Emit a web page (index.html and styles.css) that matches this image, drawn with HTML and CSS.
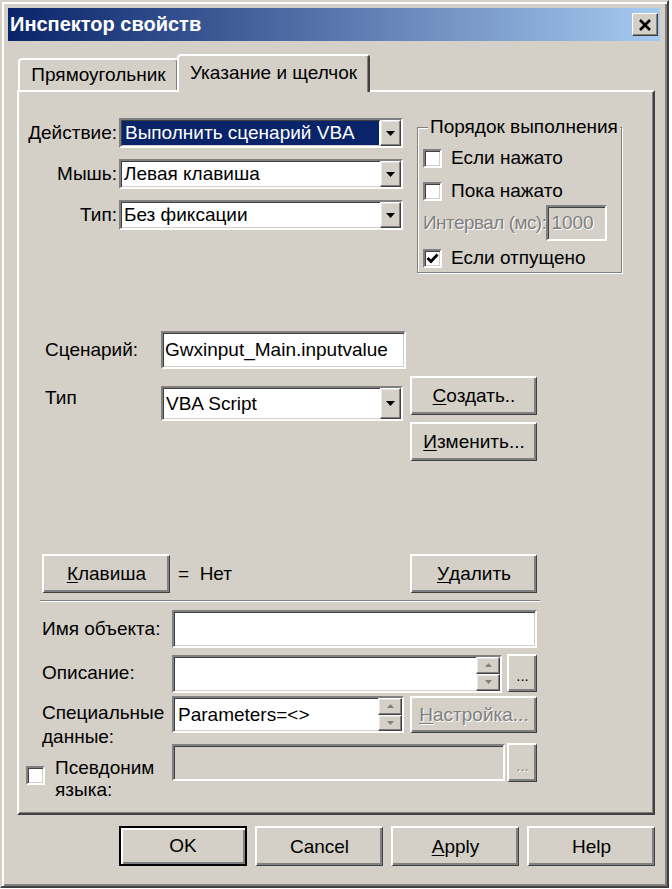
FILE: index.html
```html
<!DOCTYPE html>
<html lang="ru">
<head>
<meta charset="utf-8">
<title>Инспектор свойств</title>
<link rel="stylesheet" href="styles.css">
</head>
<body>
<div class="window">
  <div class="titlebar">
    <span class="title">Инспектор свойств</span>
    <span class="close"><svg width="14" height="12" viewBox="0 0 14 12"><path d="M2 1 L12 11 M12 1 L2 11" stroke="#000" stroke-width="2.6" fill="none"/></svg></span>
  </div>

  <div class="tabs">
    <div class="tab">Прямоугольник</div>
    <div class="tab active">Указание и щелчок</div>
  </div>

  <div class="panel">
    <div class="sec-top">
      <div class="act-grid">
        <span class="lbl-r">Действие:</span>
        <div class="combo sunken"><span class="combo-text sel">Выполнить сценарий VBA</span><span class="drop raised-sm"><svg width="9" height="5" viewBox="0 0 9 5"><polygon points="0,0 9,0 4.5,5" fill="#000"/></svg></span></div>
        <span class="lbl-r">Мышь:</span>
        <div class="combo sunken"><span class="combo-text">Левая клавиша</span><span class="drop raised-sm"><svg width="9" height="5" viewBox="0 0 9 5"><polygon points="0,0 9,0 4.5,5" fill="#000"/></svg></span></div>
        <span class="lbl-r">Тип:</span>
        <div class="combo sunken"><span class="combo-text">Без фиксации</span><span class="drop raised-sm"><svg width="9" height="5" viewBox="0 0 9 5"><polygon points="0,0 9,0 4.5,5" fill="#000"/></svg></span></div>
      </div>

      <div class="group">
        <div class="legend">Порядок выполнения</div>
        <div class="chk-row r1"><span class="check sunken-chk"></span><span>Если нажато</span></div>
        <div class="chk-row r2"><span class="check sunken-chk"></span><span>Пока нажато</span></div>
        <div class="interval"><span class="dis tight">Интервал (мс):</span><span class="field sunken int-field"><span class="dis">1000</span></span></div>
        <div class="chk-row r3"><span class="check sunken-chk"><svg width="13" height="11" viewBox="0 0 13 11"><path d="M1.5 5 L5 8.5 L11.5 1.5" stroke="#000" stroke-width="2.8" fill="none"/></svg></span><span>Если отпущено</span></div>
      </div>
    </div>

    <div class="row-script">
      <span class="lbl-s">Сценарий:</span>
      <div class="field sunken script-field">Gwxinput_Main.inputvalue</div>
    </div>

    <div class="row-type">
      <span class="lbl-s type-lbl">Тип</span>
      <div class="combo sunken type-combo"><span class="combo-text">VBA Script</span><span class="drop raised-sm"><svg width="9" height="5" viewBox="0 0 9 5"><polygon points="0,0 9,0 4.5,5" fill="#000"/></svg></span></div>
      <div class="btn-col">
        <span class="btn raised"><u>С</u>оздать..</span>
        <span class="btn raised"><u>И</u>зменить...</span>
      </div>
    </div>

    <div class="row-key">
      <span class="btn raised key-btn"><u>К</u>лавиша</span>
      <span class="key-val">=&nbsp; Нет</span>
      <span class="btn raised del-btn"><u>У</u>далить</span>
    </div>

    <div class="sep"></div>

    <div class="prop-row row-name">
      <span class="plbl">Имя объекта:</span>
      <div class="field sunken name-field"></div>
    </div>

    <div class="prop-row row-desc">
      <span class="plbl">Описание:</span>
      <div class="field sunken desc-field">
        <span class="ftext"></span>
        <span class="spin"><span class="sp raised-sm"><svg width="7" height="4" viewBox="0 0 7 4"><polygon points="0,4 7,4 3.5,0" fill="#808080"/></svg></span><span class="sp raised-sm"><svg width="7" height="4" viewBox="0 0 7 4"><polygon points="0,0 7,0 3.5,4" fill="#808080"/></svg></span></span>
      </div>
      <span class="btn raised dots">...</span>
    </div>

    <div class="prop-row row-spec">
      <span class="plbl two">Специальные<br>данные:</span>
      <div class="field sunken spec-field">
        <span class="ftext">Parameters=&lt;&gt;</span>
        <span class="spin"><span class="sp raised-sm"><svg width="7" height="4" viewBox="0 0 7 4"><polygon points="0,4 7,4 3.5,0" fill="#808080"/></svg></span><span class="sp raised-sm"><svg width="7" height="4" viewBox="0 0 7 4"><polygon points="0,0 7,0 3.5,4" fill="#808080"/></svg></span></span>
      </div>
      <span class="btn raised setup-btn dis"><u>Н</u>астройка...</span>
    </div>

    <div class="prop-row row-alias">
      <span class="check sunken-chk alias-chk"></span>
      <span class="alias-lbl">Псевдоним<br>языка:</span>
      <div class="field sunken alias-field disabled"></div>
      <span class="btn raised dots alias-dots dis">...</span>
    </div>
  </div>

  <div class="footer">
    <span class="btn fbtn default">OK</span>
    <span class="btn fbtn raised">Cancel</span>
    <span class="btn fbtn raised"><u>A</u>pply</span>
    <span class="btn fbtn raised">Help</span>
  </div>
</div>
</body>
</html>
```

FILE: styles.css
```css
* { box-sizing: border-box; }
html, body { margin: 0; padding: 0; background: #ffffff; }
body {
  font-family: "Liberation Sans", Arial, sans-serif;
  font-size: 19px;
  color: #000;
}
u { text-decoration: underline; text-underline-offset: 2px; }

.window {
  width: 669px;
  height: 888px;
  background: #d4d0c8;
  border: 2px solid;
  border-color: #d4d0c8 #404040 #404040 #d4d0c8;
  box-shadow: inset 2px 2px #ffffff, inset -2px -2px #808080;
  padding: 6px 7px 0 6px;
}

/* title bar */
.titlebar {
  height: 33px;
  background: linear-gradient(to right, #0a246a, #a6caf0);
  display: flex;
  align-items: center;
  justify-content: space-between;
  padding: 0 2px 0 2px;
}
.title { color: #fff; font-weight: bold; font-size: 20px; }
.close {
  width: 26px;
  height: 23px;
  background: #d4d0c8;
  border-style: solid;
  border-width: 1px;
  border-color: #ffffff #404040 #404040 #ffffff;
  box-shadow: inset -1px -1px #808080;
  display: flex;
  align-items: center;
  justify-content: center;
}

/* tabs */
.tabs {
  display: flex;
  align-items: flex-end;
  height: 36px;
  margin: 13px 0 0 10px;
}
.tab {
  height: 32px;
  width: 161px;
  display: flex;
  align-items: center;
  justify-content: center;
  background: #d4d0c8;
  border-style: solid;
  border-width: 2px 2px 0 2px;
  border-color: #ffffff #404040 transparent #ffffff;
  box-shadow: inset -1px 0 #808080;
  border-radius: 4px 4px 0 0;
}
.tab.active {
  position: relative;
  z-index: 1;
  height: 38px;
  width: 193px;
  margin-left: -2px;
  margin-bottom: -2px;
  padding-bottom: 3px;
}

/* panel */
.panel {
  width: 638px;
  height: 725px;
  margin-left: 9px;
  border-style: solid;
  border-width: 2px;
  border-color: #ffffff #404040 #404040 #ffffff;
  box-shadow: inset -1px -1px #808080;
  padding-top: 26px;
}

/* 3D styles */
.sunken {
  background: #fff;
  border-style: solid;
  border-width: 2px;
  border-color: #808080 #ffffff #ffffff #808080;
  box-shadow: inset 1px 1px #404040, inset -1px -1px #d4d0c8;
}
.raised {
  background: #d4d0c8;
  border-style: solid;
  border-width: 2px 1px 1px 2px;
  border-color: #ffffff #404040 #404040 #ffffff;
  box-shadow: inset -2px -2px #808080;
}
.raised-sm {
  background: #d4d0c8;
  border-style: solid;
  border-width: 1px;
  border-color: #ffffff #404040 #404040 #ffffff;
  box-shadow: inset -1px -1px #808080, inset 1px 1px #e8e6e2;
}
.dis { color: #808080; text-shadow: 1px 1px #ffffff; }

/* top section */
.sec-top { display: flex; align-items: flex-start; }
.act-grid {
  display: grid;
  grid-template-columns: 98px 284px;
  grid-auto-rows: 30px;
  column-gap: 2px;
  row-gap: 11px;
}
.lbl-r { text-align: right; align-self: center; white-space: nowrap; }
.combo { display: flex; height: 30px; }
.combo-text {
  flex: 1;
  display: flex;
  align-items: center;
  padding-left: 3px;
  white-space: nowrap;
  overflow: hidden;
}
.combo-text.sel { background: #0a246a; color: #fff; margin: 1px; padding-left: 3px; }
.drop {
  width: 21px;
  display: flex;
  align-items: center;
  justify-content: center;
}

/* group box */
.group {
  margin: 9px 0 0 14px;
  width: 205px;
  height: 146px;
  border: 1px solid #808080;
  box-shadow: inset 1px 1px #ffffff, 1px 1px #ffffff;
  padding: 0 0 0 5px;
}
.legend {
  display: table;
  margin: -12px 0 0 5px;
  padding: 0 2px;
  background: #d4d0c8;
  line-height: 22px;
  white-space: nowrap;
}
.chk-row { display: flex; align-items: center; height: 28px; gap: 9px; white-space: nowrap; }
.chk-row.r1 { margin-top: 6px; }
.chk-row.r2 { margin-top: 5px; }
.chk-row.r3 { margin-top: 3px; }
.check {
  width: 19px;
  height: 19px;
  flex: none;
  display: flex;
  align-items: center;
  justify-content: center;
}
.sunken-chk {
  background: #fff;
  border-style: solid;
  border-width: 2px;
  border-color: #808080 #ffffff #ffffff #808080;
  box-shadow: inset 1px 1px #404040, inset -1px -1px #d4d0c8;
}
.interval { display: flex; align-items: center; height: 36px; white-space: nowrap; }
.tight { letter-spacing: -0.55px; }
.field { display: flex; align-items: center; padding-left: 2px; white-space: nowrap; overflow: hidden; }
.int-field { width: 61px; height: 36px; background: #d4d0c8; padding-left: 3px; flex: none; }

/* script rows */
.row-script { display: flex; align-items: center; margin: 58px 0 0 26px; }
.lbl-s { width: 116px; flex: none; }
.script-field { width: 245px; height: 38px; }
.row-type { display: flex; align-items: flex-start; margin: 7px 0 0 26px; }
.type-lbl { margin-top: 10px; line-height: 24px; }
.type-combo { width: 242px; height: 35px; margin-top: 10px; }
.btn-col { display: flex; flex-direction: column; gap: 7px; margin-left: 7px; }
.btn {
  display: flex;
  align-items: center;
  justify-content: center;
  white-space: nowrap;
}
.btn-col .btn { width: 127px; height: 39px; }

/* key row */
.row-key { display: flex; align-items: center; margin: 93px 0 0 23px; width: 495px; }
.key-btn { width: 128px; height: 39px; }
.key-val { margin-left: 8px; }
.del-btn { width: 127px; height: 39px; margin-left: auto; }

.sep {
  margin: 7px 0 0 21px;
  width: 500px;
  height: 2px;
  border-top: 1px solid #808080;
  border-bottom: 1px solid #ffffff;
}

/* property rows */
.prop-row { display: flex; align-items: center; margin-left: 23px; }
.plbl { width: 130px; flex: none; white-space: nowrap; }
.row-name { margin-top: 8px; }
.name-field { width: 365px; height: 38px; }
.row-desc { margin-top: 6px; height: 38px; }
.desc-field { width: 330px; height: 38px; margin-top: 1px; }
.ftext { flex: 1; }
.spin { width: 24px; align-self: stretch; display: flex; flex-direction: column; }
.sp { flex: 1; display: flex; align-items: center; justify-content: center; }
.dots { width: 30px; height: 38px; margin-left: 5px; font-size: 15px; padding-top: 4px; }
.row-spec { margin-top: 4px; height: 37px; align-items: flex-start; }
.plbl.two { line-height: 24px; margin-top: 5px; }
.spec-field { width: 232px; height: 37px; }
.spec-field .ftext { padding-left: 2px; }
.setup-btn { width: 127px; height: 37px; margin-left: 6px; }
.row-alias { margin: 10px 0 0 7px; height: 39px; align-items: flex-start; }
.alias-chk { margin-top: 23px; }
.alias-lbl { width: 117px; margin-left: 10px; line-height: 22px; margin-top: 14px; flex: none; }
.alias-field { width: 333px; height: 37px; margin-top: 1px; }
.field.disabled { background: #d4d0c8; }
.alias-dots { width: 30px; height: 39px; margin-left: 2px; }

/* footer */
.footer {
  display: flex;
  justify-content: flex-end;
  gap: 8px;
  margin: 11px 5px 0 0;
}
.fbtn { width: 128px; height: 40px; }
.default {
  background: #d4d0c8;
  border: 2px solid #000;
  box-shadow: inset 2px 2px #ffffff, inset -2px -2px #808080;
}
```
